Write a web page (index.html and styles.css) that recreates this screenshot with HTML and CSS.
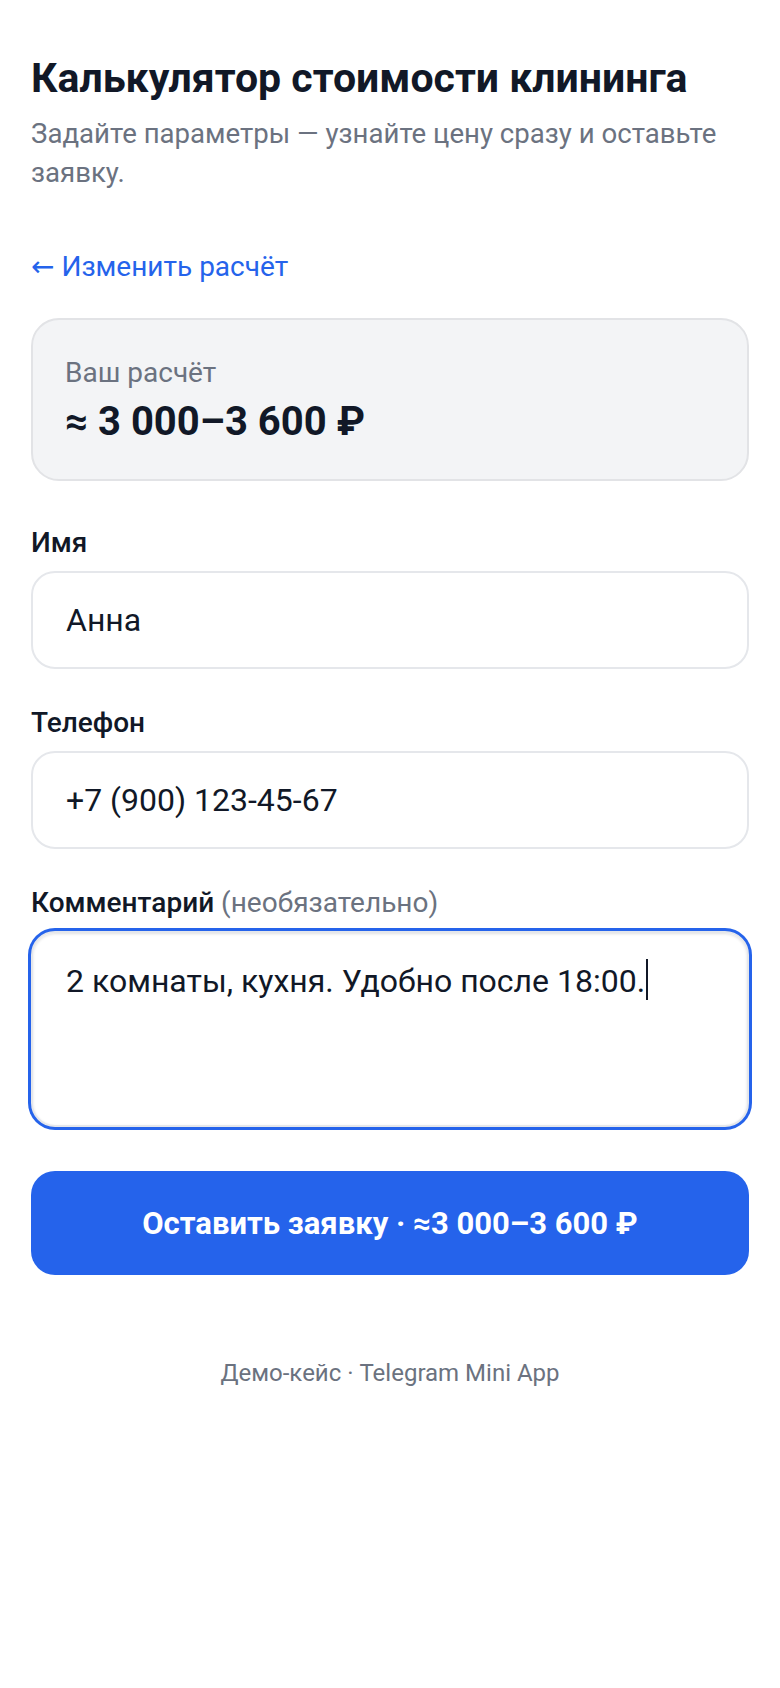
FILE: index.html
```html
<!DOCTYPE html>
<html lang="ru">
<head>
<meta charset="utf-8">
<title>Калькулятор стоимости клининга</title>
<link rel="stylesheet" href="styles.css">
</head>
<body>
<main class="page">
  <header class="head">
    <h1 class="title">Калькулятор стоимости клининга</h1>
    <p class="subtitle">Задайте параметры — узнайте цену сразу и оставьте заявку.</p>
  </header>

  <a class="back" href="#">← Изменить расчёт</a>

  <section class="summary">
    <div class="summary-label">Ваш расчёт</div>
    <div class="summary-price">≈ 3 000–3 600 ₽</div>
  </section>

  <form class="form">
    <label class="field">
      <span class="field-label">Имя</span>
      <input class="input" type="text" value="Анна">
    </label>
    <label class="field">
      <span class="field-label">Телефон</span>
      <input class="input" type="tel" value="+7 (900) 123-45-67">
    </label>
    <div class="field">
      <span class="field-label">Комментарий <span class="field-hint">(необязательно)</span></span>
      <div class="textarea is-focused" role="textbox" aria-multiline="true">2 комнаты, кухня. Удобно после 18:00.<span class="caret"></span></div>
    </div>
    <button class="submit" type="button">Оставить заявку · ≈3 000–3 600 ₽</button>
  </form>

  <footer class="foot">Демо-кейс · Telegram Mini App</footer>
</main>
</body>
</html>
```

FILE: styles.css
```css
* { box-sizing: border-box; }

html, body {
  margin: 0;
  padding: 0;
  background: #ffffff;
}

body {
  font-family: Roboto, "Noto Sans", "DejaVu Sans", sans-serif;
  color: #111827;
}

.page {
  padding: 54px 31px 60px;
  display: flex;
  flex-direction: column;
}

.title {
  margin: 0;
  font-size: 41px;
  line-height: 48px;
  font-weight: 700;
  color: #111827;
}

.subtitle {
  margin: 12px 0 0;
  font-size: 27.6px;
  line-height: 39px;
  color: #6b7280;
}

.back {
  display: block;
  margin-top: 55px;
  font-size: 28px;
  line-height: 39px;
  color: #2563eb;
  text-decoration: none;
}

.summary {
  margin-top: 32px;
  background: #f3f4f6;
  border: 2px solid #e2e3e6;
  border-radius: 28px;
  padding: 33px 32px 34px;
}

.summary-label {
  font-size: 28px;
  line-height: 39px;
  color: #6b7280;
}

.summary-price {
  margin-top: 7px;
  font-size: 40px;
  line-height: 46px;
  font-weight: 700;
  color: #111827;
}

.form {
  margin-top: 42px;
  display: flex;
  flex-direction: column;
  gap: 34px;
}

.field {
  display: flex;
  flex-direction: column;
  gap: 9px;
}

.field-label {
  font-size: 28px;
  line-height: 39px;
  font-weight: 500;
  color: #111827;
}

.field-hint {
  font-weight: 400;
  color: #6b7280;
}

.input,
.textarea {
  width: 100%;
  border: 2px solid #e5e7eb;
  border-radius: 24px;
  background: #ffffff;
  font-family: Roboto, "Noto Sans", "DejaVu Sans", sans-serif;
  font-size: 32px;
  line-height: 46px;
  color: #111827;
  padding: 0 33px;
  margin: 0;
}

.input {
  height: 98px;
  outline: none;
}

.textarea {
  height: 196px;
  padding-top: 25px;
}

.textarea.is-focused {
  box-shadow: 0 0 0 3px #2563eb, inset 0 1px 3px rgba(0, 0, 0, 0.12);
}

.caret {
  display: inline-block;
  width: 2px;
  height: 41px;
  background: #111827;
  vertical-align: -8px;
  margin-left: 1px;
}

.submit {
  margin-top: 10px;
  height: 104px;
  border: none;
  border-radius: 24px;
  background: #2563eb;
  color: #ffffff;
  font-family: Roboto, "Noto Sans", "DejaVu Sans", sans-serif;
  font-size: 31px;
  font-weight: 700;
}

.foot {
  margin-top: 81px;
  text-align: center;
  font-size: 24px;
  line-height: 34px;
  color: #6b7280;
}
```
